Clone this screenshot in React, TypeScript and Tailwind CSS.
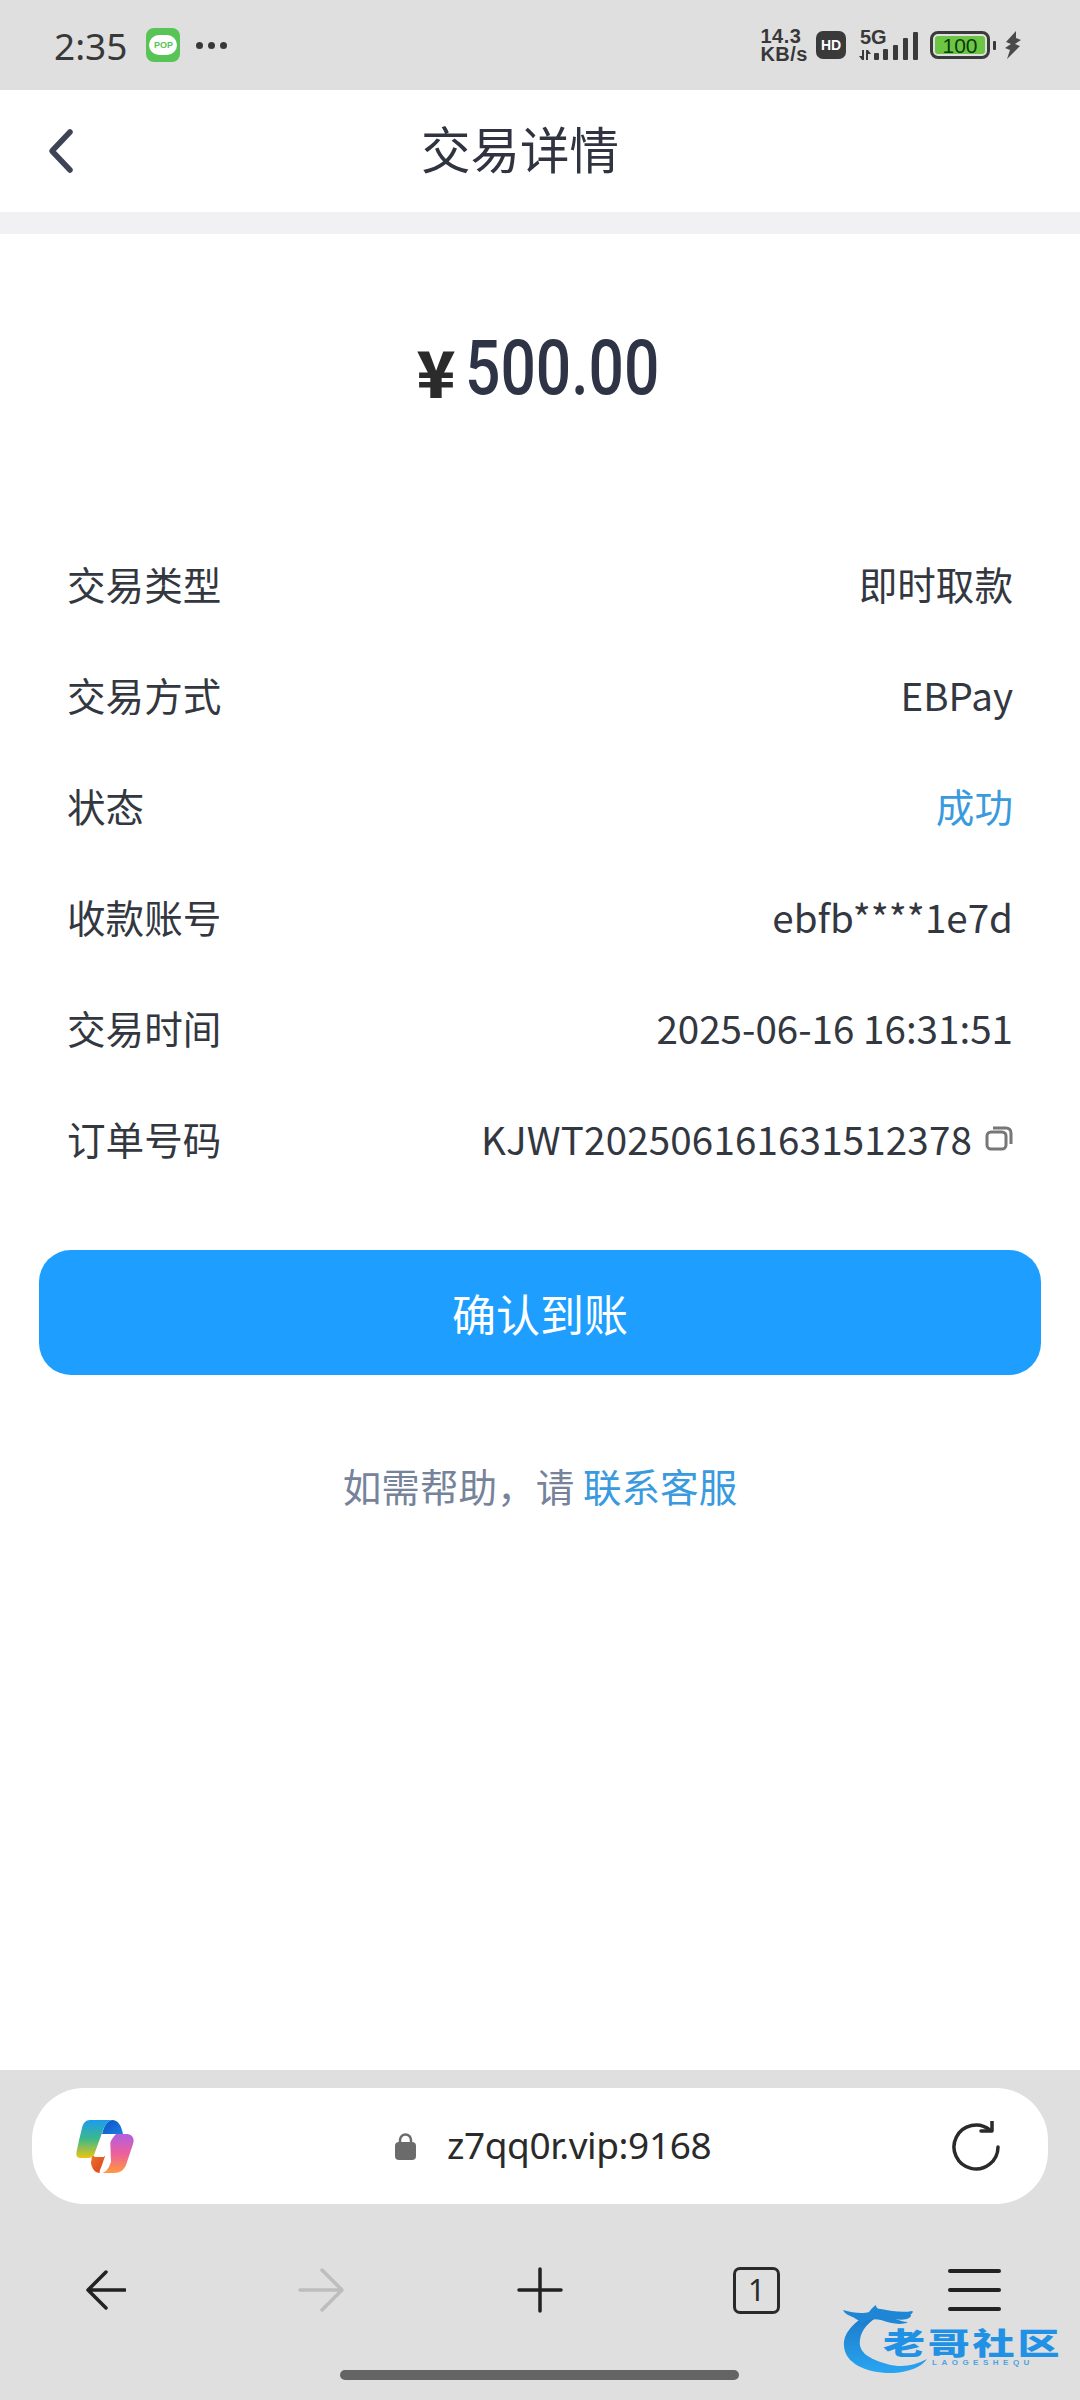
import React from "react";

const cjk = '"Noto Sans CJK SC", "Noto Sans", sans-serif';

const rows: [string, string][] = [
  ["交易类型", "即时取款"],
  ["交易方式", "EBPay"],
  ["状态", "成功"],
  ["收款账号", "ebfb****1e7d"],
  ["交易时间", "2025-06-16 16:31:51"],
];

function StatusBar() {
  return (
    <div className="flex h-[90px] shrink-0 items-center bg-[#dfdfdf] pl-[54px] pr-[59px] text-[#383838]">
      <span className="text-[37px] leading-none" style={{ fontFamily: '"Noto Sans", sans-serif' }}>2:35</span>
      <div className="ml-[19px] flex h-[34px] w-[34px] items-center justify-center rounded-[8px] bg-[#57c455]">
        <div className="flex h-[20px] w-[28px] items-center justify-center rounded-full bg-white text-[9px] font-bold leading-none text-[#57c455]" style={{ fontFamily: '"Liberation Sans", sans-serif' }}>POP</div>
      </div>
      <div className="ml-[16px] flex gap-[5px]">
        <span className="h-[7px] w-[7px] rounded-full bg-[#383838]" />
        <span className="h-[7px] w-[7px] rounded-full bg-[#383838]" />
        <span className="h-[7px] w-[7px] rounded-full bg-[#383838]" />
      </div>
      <div className="ml-auto flex items-center">
        <div className="flex flex-col text-[20px] font-bold leading-[18px] tracking-[0.5px]" style={{ fontFamily: '"Liberation Sans", sans-serif' }}>
          <span>14.3</span>
          <span>KB/s</span>
        </div>
        <div className="ml-[8px] flex h-[28px] w-[30px] items-center justify-center rounded-[7px] bg-[#3a3a3a] text-[14px] font-bold leading-none text-white" style={{ fontFamily: '"Liberation Sans", sans-serif' }}>HD</div>
        <div className="relative ml-[12px] h-[30px] w-[60px]">
          <span className="absolute left-[2px] top-[-3px] text-[20px] font-bold leading-[20px]" style={{ fontFamily: '"Liberation Sans", sans-serif' }}>5G</span>
          <svg width="60" height="30" viewBox="0 0 60 30" fill="#3a3a3a">
            <path d="M4 20h2v10H4l-3-4h3zM8 20h2l3 4h-3v6H8z" />
            <rect x="16" y="23" width="5" height="7" rx="1" />
            <rect x="25" y="19" width="5" height="11" rx="1" />
            <rect x="35" y="15" width="5" height="15" rx="1" />
            <rect x="45" y="8" width="5" height="22" rx="1" />
            <rect x="55" y="2" width="5" height="28" rx="1" />
          </svg>
        </div>
        <div className="ml-[12px] flex h-[28px] w-[60px] items-center rounded-[8px] border-[3px] border-[#3a3a3a] p-[2px]">
          <div className="flex h-full w-full items-center justify-center rounded-[3px] bg-[#6cc644] text-[21px] leading-none text-[#0b3a0b]" style={{ fontFamily: '"Liberation Sans", sans-serif' }}>100</div>
        </div>
        <div className="ml-[3px] h-[9px] w-[3px] rounded-[1px] bg-[#3a3a3a]" />
        <svg className="ml-[8px]" width="17" height="28" viewBox="0 0 17 28" fill="#4a4a4a">
          <path d="M12 0 2 11l5 2-6 4 5 2-3 9 13-13-5-2 6-4-5-2z" />
        </svg>
      </div>
    </div>
  );
}

function Nav() {
  return (
    <div className="flex h-[122px] shrink-0 items-center bg-white pl-[40px] pr-[120px]">
      <svg className="w-[40px]" width="40" height="48" viewBox="0 0 40 48" fill="none" stroke="#3e4355" strokeWidth="5.500" strokeLinecap="round" strokeLinejoin="round">
        <path d="M30 5 12 24l18 19" />
      </svg>
      <div className="flex-1 pb-[6px] text-center text-[49.500px] leading-none text-[#303340]" style={{ fontFamily: cjk }}>交易详情</div>
    </div>
  );
}

function Amount() {
  return (
    <div className="flex h-[294px] items-start justify-center pt-[95px] text-[#2e3446]">
      <div className="flex items-end">
        <span className="mb-[3px] text-[64px] font-black leading-[68px] text-[#2b2b2b]" style={{ fontFamily: cjk }}>¥</span>
        <span className="ml-[10px] inline-block w-[198px] origin-left scale-x-[0.82] text-[76px] font-medium leading-[78px]" style={{ fontFamily: "Roboto, sans-serif" }}>500.00</span>
      </div>
    </div>
  );
}

function DetailRow({ label, value, blue }: { label: string; value: string; blue?: boolean }) {
  return (
    <div className="flex h-[111px] items-center justify-between text-[38.600px] leading-none text-[#33373f]">
      <span>{label}</span>
      <span className={blue ? "text-[#3a9ade]" : ""}>{value}</span>
    </div>
  );
}

function Copilot() {
  return (
    <svg width="58" height="54" viewBox="0 0 58 54">
      <defs>
        <linearGradient id="cpA" x1="0" y1="0" x2="0" y2="1">
          <stop offset="0" stopColor="#1c9bf0" />
          <stop offset="0.5" stopColor="#3cb98a" />
          <stop offset="1" stopColor="#ecc411" />
        </linearGradient>
        <linearGradient id="cpB" x1="0" y1="0" x2="0" y2="1">
          <stop offset="0" stopColor="#b05fe0" />
          <stop offset="0.5" stopColor="#ec5f9e" />
          <stop offset="1" stopColor="#ff9a3d" />
        </linearGradient>
        <linearGradient id="cpC" x1="0" y1="0" x2="1" y2="1">
          <stop offset="0" stopColor="#0d4fc7" />
          <stop offset="1" stopColor="#1c7fe0" />
        </linearGradient>
        <linearGradient id="cpD" x1="0" y1="0" x2="1" y2="1">
          <stop offset="0" stopColor="#f0702a" />
          <stop offset="1" stopColor="#d8401f" />
        </linearGradient>
      </defs>
      <path d="M26 15C28 7 31 2 36 1c6 0 9 5 11 14z" fill="url(#cpC)" />
      <path d="M16 37h13l-3 9c-2 5-3 7-2 8-5 0-8-4-9-10z" fill="url(#cpD)" />
      <path d="M14 1h22c-5 1-8 7-10 13l-8 22c-1 2-3 3-6 3H4c-3 0-4-3-3.500-6C2 25 4 17 6 9c1-5 4-8 8-8z" fill="url(#cpA)" />
      <path d="M34 15h16c6 0 9 4 7 10l-7 21c-2 5-6 8-12 8H26c5-1 7-6 9-11z" fill="url(#cpB)" />
      <path d="M28 15h12c-5 5-8 13-12 23H18c6-8 8-18 10-23z" fill="#ffffff" />
    </svg>
  );
}

function UrlBar() {
  return (
    <div className="ml-[32px] mt-[18px] flex h-[116px] w-[1016px] items-center rounded-[52px] bg-white pl-[44px] pr-[48px]">
      <Copilot />
      <div className="ml-[261px] flex items-center">
        <svg width="21" height="27" viewBox="0 0 21 27">
          <path d="M5 10V7a5.500 5.500 0 0 1 11 0v3" fill="none" stroke="#6b6b6b" strokeWidth="2.500" />
          <rect x="0" y="9" width="21" height="18" rx="4" fill="#6b6b6b" />
        </svg>
        <span className="ml-[31px] pb-[3px] text-[37px] leading-none tracking-[-0.4px] text-[#2a2a2a]" style={{ fontFamily: '"Noto Sans", sans-serif' }}>z7qq0r.vip:9168</span>
      </div>
      <svg className="ml-auto" width="48" height="50" viewBox="0 0 48 50" fill="none" stroke="#2a2a2a" strokeWidth="3.500" strokeLinecap="round" strokeLinejoin="round">
        <path d="M38 9A22 22 0 1 0 46 26" />
        <path d="M29 10h11V0" />
      </svg>
    </div>
  );
}

function Toolbar() {
  return (
    <div className="mt-[63px] flex h-[46px] items-center pl-[86px]">
      <svg width="40" height="40" viewBox="0 0 40 40" fill="none" stroke="#222" strokeWidth="3.500" strokeLinecap="round" strokeLinejoin="round">
        <path d="M39 20H2M20 2 2 20l18 18" />
      </svg>
      <svg className="ml-[172px]" width="46" height="44" viewBox="0 0 46 44" fill="none" stroke="#bdbdbd" strokeWidth="3.500" strokeLinecap="round" strokeLinejoin="round">
        <path d="M2 22h42M24 2l20 20-20 20" />
      </svg>
      <svg className="ml-[173px]" width="46" height="46" viewBox="0 0 46 46" fill="none" stroke="#222" strokeWidth="3.500" strokeLinecap="round">
        <path d="M2 23h42M23 2v42" />
      </svg>
      <div className="ml-[170px] flex h-[47px] w-[47px] items-center justify-center rounded-[7px] border-[3px] border-[#2a2a2a] text-[30px] leading-none text-[#2a2a2a]" style={{ fontFamily: '"Noto Sans", sans-serif' }}>1</div>
      <div className="ml-[168px] flex h-[42px] w-[53px] flex-col justify-between">
        <span className="h-[4px] rounded-full bg-[#222]" />
        <span className="h-[4px] rounded-full bg-[#222]" />
        <span className="h-[4px] rounded-full bg-[#222]" />
      </div>
    </div>
  );
}

function Watermark() {
  return (
    <div className="absolute left-[843px] top-[2305px] h-[70px] w-[220px]">
      <svg className="absolute left-0 top-0" width="90" height="70" viewBox="0 0 90 70">
        <defs>
          <linearGradient id="wm" x1="0" y1="0" x2="0" y2="1">
            <stop offset="0" stopColor="#1978c8" />
            <stop offset="1" stopColor="#2aa5f2" />
          </linearGradient>
        </defs>
        <path d="M28 8C8 18 0 30 1 41c1 18 24 28 50 27 14-1 28-6 33-14-13 7-26 9-40 5C26 54 15 47 17 35 18 25 26 16 38 10z" fill="url(#wm)" />
        <path d="M0 5c10 3 20 4 26 2 2-3 4-5 7-7 0 3 2 4 5 4 10 2 22 4 31 2 2 0 0 3-2 4 2 0 1 2-1 3-3 2-9 2-14 1 5 1 8 3 13 3-7 4-18 1-27-2-8-2-14 0-20 3-2-3-8-6-13-8C3 9 1 7 0 5z" fill="#1f86d6" />
      </svg>
      <div className="absolute left-[40px] top-[21px] origin-left scale-x-[1.4] whitespace-nowrap text-[30px] font-black leading-[30px] tracking-[2px] text-[#2191e6]" style={{ fontFamily: cjk }}>老哥社区</div>
      <div className="absolute left-[89px] top-[54px] whitespace-nowrap text-[8px] font-bold leading-[8px] tracking-[4.500px] text-[#4da3e0]" style={{ fontFamily: '"Liberation Sans", sans-serif' }}>LAOGESHEQU</div>
    </div>
  );
}

export default function App() {
  return (
    <div className="relative flex h-[2400px] w-[1080px] flex-col overflow-hidden bg-white" style={{ fontFamily: cjk }}>
      <StatusBar />
      <Nav />
      <div className="h-[22px] shrink-0 bg-[#f1f1f4]" />
      <main className="flex-1 bg-white">
        <Amount />
        <div className="px-[67px]">
          {rows.map(([l, v]) => (
            <DetailRow key={l} label={l} value={v} blue={l === "状态"} />
          ))}
          <div className="flex h-[111px] items-center justify-between text-[38.600px] leading-none text-[#33373f]">
            <span>订单号码</span>
            <span className="flex items-center tracking-[0.14px]">
              KJWT202506161631512378
              <svg className="ml-[13px]" width="28" height="25" viewBox="0 0 28 25" fill="none" stroke="#777" strokeWidth="3">
                <rect x="2" y="6" width="19" height="17" rx="4" />
                <path d="M8 2h13c3 0 5 2 5 5v11" />
              </svg>
            </span>
          </div>
        </div>
        <div className="mx-[39px] mt-[56px] flex h-[125px] items-center justify-center rounded-[32px] bg-[#1e9fff] text-[44px] leading-none text-white">确认到账</div>
        <div className="mt-[87px] text-center text-[38.600px] leading-[46px] text-[#76839a]">
          如需帮助，请 <span className="text-[#3a9ade]">联系客服</span>
        </div>
      </main>
      <div className="h-[330px] shrink-0 bg-[#dfdfdf]">
        <UrlBar />
        <Toolbar />
        <div className="ml-[340px] mt-[57px] h-[10px] w-[399px] rounded-full bg-[#646464]" />
      </div>
      <Watermark />
    </div>
  );
}
